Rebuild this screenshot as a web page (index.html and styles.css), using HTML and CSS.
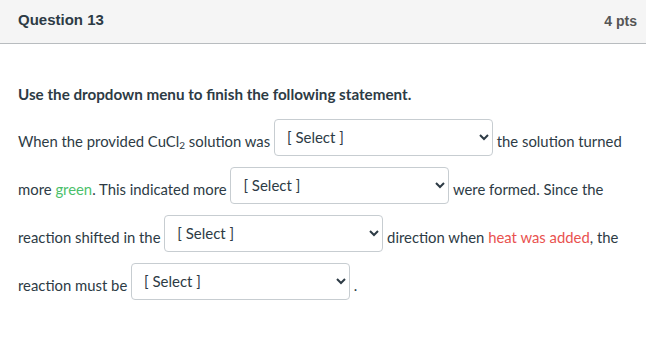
FILE: index.html
```html
<!DOCTYPE html>
<html>
<head>
<meta charset="utf-8">
<link rel="stylesheet" href="styles.css">
</head>
<body>
<div class="quiz">
  <div class="header">
    <span class="title">Question 13</span>
    <span class="pts">4 pts</span>
  </div>
  <div class="content">
    <p class="lead">Use the dropdown menu to finish the following statement.</p>
    <p class="statement">When the provided CuCl<sub>2</sub> solution was <select class="dd"><option>[ Select ]</option></select> the solution turned more <span class="green">green</span>. This indicated more <select class="dd"><option>[ Select ]</option></select> were formed. Since the reaction shifted in the <select class="dd"><option>[ Select ]</option></select> direction when <span class="red">heat was added</span>, the reaction must be <select class="dd"><option>[ Select ]</option></select> .</p>
  </div>
</div>
</body>
</html>
```
FILE: styles.css
```css
html, body {
  margin: 0;
  padding: 0;
  background: #fff;
}
.quiz {
  width: 646px;
}
.header {
  height: 43px;
  background: #f5f5f5;
  border-bottom: 1px solid #b8bcbf;
  display: flex;
  align-items: center;
  justify-content: space-between;
  padding: 0 9px 0 18px;
  box-sizing: content-box;
  font-family: "Liberation Sans", Arial, sans-serif;
  font-weight: bold;
  color: #2d3b45;
}
.title {
  font-size: 15px;
  margin-top: -5px;
}
.pts {
  font-size: 14px;
  color: #555;
  margin-top: -1px;
}
.content {
  padding: 0 18px;
  font-family: Lato, "Liberation Sans", sans-serif;
  font-size: 14.85px;
  color: #2d3b45;
}
.lead {
  font-weight: bold;
  font-size: 15.2px;
  margin: 41px 0 0;
  line-height: 18px;
}
.statement {
  margin: 14px 0 0;
  line-height: 48px;
  width: 612px;
}
sub {
  font-size: 10px;
  line-height: 0;
  vertical-align: -2px;
}
.dd {
  width: 219px;
  height: 37px;
  border: 1px solid #c7cdd1;
  border-radius: 4px;
  background: #fff;
  font-family: Lato, "Liberation Sans", sans-serif;
  font-size: 15px;
  color: #2d3b45;
  padding: 0 3px 0 8px;
  margin: 0;
  vertical-align: 4px;
}
.green {
  color: #4bbf6b;
}
.red {
  color: #e9524f;
}
```
